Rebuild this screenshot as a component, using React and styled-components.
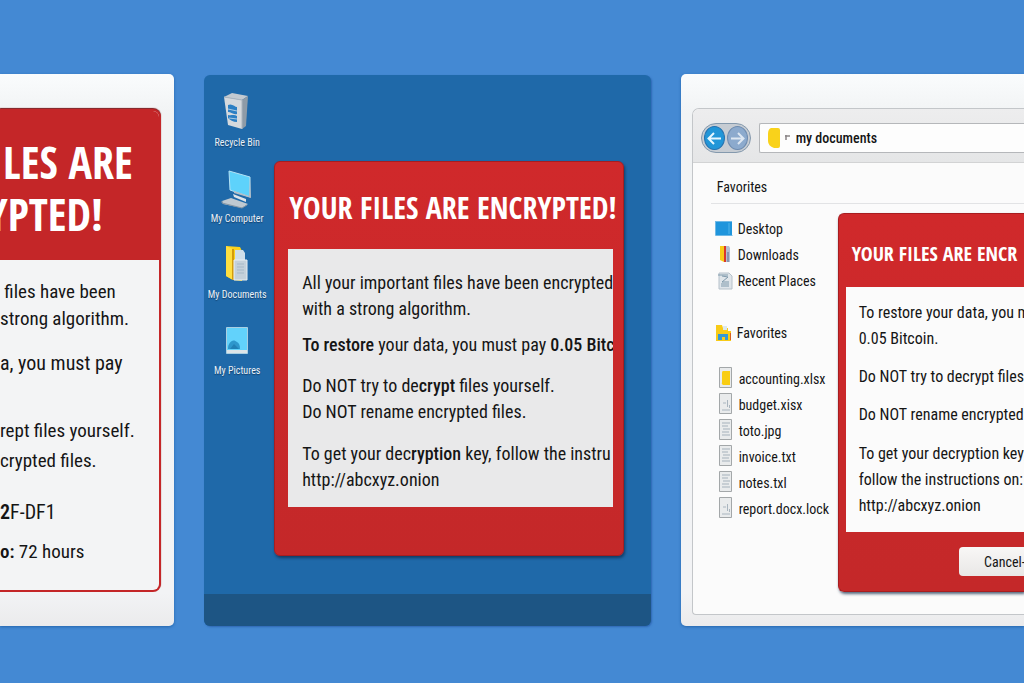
import React from 'react';
import styled, { createGlobalStyle } from 'styled-components';

const GlobalStyle = createGlobalStyle`
  * {
    box-sizing: border-box;
  }

  body {
    margin: 0;
    background: #4489d3;
    color: #151515;
    font-family: 'Roboto Condensed', 'Open Sans', sans-serif;
    overflow-x: hidden;
  }

  p, h1, h2, ul {
    margin: 0;
    padding: 0;
  }
`;

const Page = styled.main`
  display: grid;
  grid-template-columns: 174fr 446fr 343fr;
  column-gap: 30px;
  min-height: 100vh;
  padding: 74px 0 57px;
`;

const Panel = styled.section`
  min-width: 0;
  overflow: hidden;
  display: flex;
  flex-direction: column;
  border-radius: ${p => p.$radius};
  background: linear-gradient(#fafcfd, #f1f3f4 40px, #f2f3f5 94%, #ebebec);
  box-shadow: 0 1px 3px #2466ad;
`;

const Title = styled.h2`
  color: #fff;
  font-family: 'Open Sans Condensed', 'Roboto Condensed', sans-serif;
  font-weight: 700;
  font-size: ${p => p.$size}px;
  line-height: ${p => p.$line}px;
  white-space: nowrap;
`;

const Overhang = styled.span`
  display: block;
  margin-left: -16px;
`;

const Text = styled.p`
  font-size: ${p => p.$size || 18}px;
  line-height: ${p => p.$line || 26}px;
  margin-top: ${p => p.$top || 0}px;
  white-space: nowrap;

  b {
    font-weight: 600;
  }

  em {
    font-style: normal;
    font-weight: 500;
  }
`;

const Notice = styled.article`
  flex: 1;
  display: flex;
  flex-direction: column;
  overflow: hidden;
  margin: 35px 13px 34px 0;
  border: 2px solid #c42628;
  border-left: 0;
  border-radius: 0 8px 8px 0;
  background: #f3f4f5;
  box-shadow: 0 -1px 1px #7c1518;
`;

const NoticeHead = styled.header`
  padding: 25px 0 20px 3px;
  background: #c42628;
`;

const NoticeBody = styled.div`
  padding: 18px 0 0;
`;

const Desktop = styled(Panel)`
  background: #1f69a9;
  margin-top: 1px;
  box-shadow: 1px 1px 2px #2d66b3;
`;

const DesktopArea = styled.div`
  flex: 1;
  display: flex;
  align-items: flex-start;
`;

const Shortcuts = styled.ul`
  width: 70px;
  flex: none;
  list-style: none;
  padding-top: 16px;
`;

const Shortcut = styled.li`
  height: 76px;
  padding-right: 4px;
  display: flex;
  flex-direction: column;
  align-items: center;
  color: #eaf1f8;
  font-size: 10px;
  line-height: 16px;
  white-space: nowrap;
  text-shadow: 0 1px 1px #123f69;
`;

const Taskbar = styled.footer`
  height: 32px;
  background: #1d5584;
`;

const Alert = styled.article`
  flex: 1;
  min-width: 0;
  margin: ${p => p.$margin};
  border-radius: ${p => p.$flush ? '6px 0 0 6px' : '6px'};
  border: 1px solid #a81d20;
  border-right-width: ${p => p.$flush ? 0 : '1px'};
  background: linear-gradient(#d0292b, #c42829);
  box-shadow: 1px 2px 3px rgba(14, 40, 70, 0.7);
`;

const Paper = styled.div`
  margin: ${p => p.$margin};
  padding: ${p => p.$padding};
  background: ${p => p.$color};
  overflow: hidden;
`;

const Explorer = styled.div`
  flex: 1;
  display: flex;
  flex-direction: column;
  margin: 34px 0 11px 11px;
  border: 1px solid #c3c6c9;
  border-right: 0;
  border-radius: 7px 0 0 4px;
  background: #fbfbfb;
  overflow: hidden;
`;

const Toolbar = styled.header`
  display: flex;
  align-items: center;
  gap: 8px;
  padding: 14px 0 9px 8px;
  background: linear-gradient(#ededee, #e5e6e7);
  border-bottom: 1px solid #d2d3d4;
`;

const NavPill = styled.nav`
  display: flex;
  align-items: center;
  justify-content: space-between;
  width: 50px;
  height: 30px;
  padding: 0 2px;
  border: 1px solid #8499ad;
  border-radius: 15px;
  background: #c6ccd3;
`;

const NavButton = styled.button`
  width: 21px;
  height: 24px;
  padding: 0;
  display: grid;
  place-items: center;
  border: 1px solid ${p => p.$active ? '#2673b0' : '#6e8cb0'};
  border-radius: 50%;
  background: ${p => p.$active ? '#2196d8' : '#8caacd'};
`;

const Address = styled.label`
  flex: 1;
  min-width: 0;
  height: 30px;
  display: flex;
  align-items: center;
  gap: 5px;
  padding-left: 8px;
  border: 1px solid #b5b7ba;
  border-right: 0;
  border-radius: 2px 0 0 2px;
  background: #fdfdfd;

  input {
    flex: 1;
    min-width: 0;
    padding: 0;
    border: 0;
    outline: 0;
    background: none;
    color: #151515;
    font: 500 14px 'Roboto Condensed', sans-serif;
  }
`;

const SectionTitle = styled.h2`
  margin: 0 0 0 18px;
  padding: 11px 0 3px 6px;
  border-bottom: 1px solid #e2e3e5;
  font-size: 14px;
  line-height: 26px;
  font-weight: 400;
`;

const Content = styled.div`
  flex: 1;
  display: flex;
  align-items: flex-start;
`;

const Sidebar = styled.div`
  width: 145px;
  flex: none;
  padding: 12px 0 0 22px;
`;

const List = styled.ul`
  list-style: none;
  margin-bottom: ${p => p.$gap || 0}px;
`;

const Item = styled.li`
  height: 26px;
  display: flex;
  align-items: center;
  gap: 5px;
  font-size: 14px;
  white-space: nowrap;

  svg {
    flex: none;
  }
`;

const Actions = styled.div`
  display: flex;
  justify-content: flex-end;
  padding: 15px 0 15px;
`;

const CancelButton = styled.button`
  width: 65px;
  height: 29px;
  padding: 0 0 0 25px;
  border: 0;
  border-radius: 4px 0 0 4px;
  background: linear-gradient(#f8f7f6, #e9e7e6);
  color: #151515;
  font: 14px 'Roboto Condensed', sans-serif;
  text-align: left;
  white-space: nowrap;
`;

const RecycleIcon = () => (
  <svg width="28" height="44" viewBox="0 0 28 44">
    <path d="M1 6 9 2l16 3-6 4z" fill="#c3cad1" />
    <path d="M1 6l18 3v29L5 34z" fill="#d5d9dd" />
    <path d="M19 9l6-4-2 30-4 3z" fill="#8e9ba7" />
    <path d="M1 6l18 3v29" fill="none" stroke="#aab4bd" />
    <path d="M5 14c4-2 7 2 9 2v7c-4 1-6-2-9-2zM5 24c3 1 6-1 9 1v6c-4 0-7-2-9-4z" fill="#2c7fc4" />
    <path d="M5 18l9 2M6 27l8 1" stroke="#a8cbe6" />
  </svg>
);

const ComputerIcon = () => (
  <svg width="36" height="44" viewBox="0 0 36 44">
    <path d="M10 4l21 6v20L11 23z" fill="#5ed2fb" stroke="#b3e2f5" />
    <path d="M31 10l1 21-17-5 0-2 15 5z" fill="#b3bdc6" />
    <path d="M14 27l13 5v3l-12-5z" fill="#dfe4e8" />
    <path d="M3 34l9-3 17 6-6 4-19-4z" fill="#bfc9d1" />
    <path d="M3 34v2l20 5 5-3" fill="none" stroke="#8495a3" />
  </svg>
);

const DocumentsIcon = () => (
  <svg width="26" height="44" viewBox="0 0 26 44">
    <path d="M2 3l14 1 2 4v30l-9-1-7-4z" fill="#fbd21c" />
    <path d="M2 3l7 3v31l-7-4z" fill="#ffdf40" />
    <path d="M9 6v31" stroke="#d39c0c" strokeWidth="2" />
    <path d="M11 7h8l2 3v8H11z" fill="#cfdeea" />
    <path d="M10 17h13v20H10z" fill="#c4d0da" stroke="#e9eff3" />
    <path d="M13 21h7M13 24h7M13 27h7M13 30h7" stroke="#a6b8c7" />
  </svg>
);

const PictureIcon = () => (
  <svg width="24" height="44" viewBox="0 0 24 44">
    <path d="M1.500 8.500h21v26h-21z" fill="#62d2fb" stroke="#a9cfe2" />
    <path d="M2 31h20v3H2z" fill="#dce4e8" />
    <path d="M3 30c0-7 5-11 9-7 2 1 3 3 3 7z" fill="#2e97cc" />
    <path d="M5 30l4-5 5 5z" fill="#2180b5" />
  </svg>
);

const Arrow = ({ flip }) => (
  <svg width="17" height="17" viewBox="0 0 17 17">
    <path
      d={flip ? 'M2 8.500h12M9 3l5.500 5.500L9 14' : 'M15 8.500H3M8 3L2.500 8.500 8 14'}
      fill="none"
      stroke={flip ? '#dde7f2' : '#e5f7ff'}
      strokeWidth="2"
    />
  </svg>
);

const TabIcon = () => (
  <svg width="12" height="20" viewBox="0 0 12 20">
    <path d="M3 0h7q2 0 2 2v16q0 2-2 2H6Q0 18 0 13V6Q0 1 3 0z" fill="#f9d21b" />
  </svg>
);

const CrumbIcon = () => (
  <svg width="6" height="6" viewBox="0 0 6 6">
    <path d="M0 1h5M1 0v5" stroke="#8b8587" strokeWidth="1.500" />
  </svg>
);

const DesktopIcon = () => (
  <svg width="18" height="20" viewBox="0 0 18 20">
    <path d="M1 3h16v13H1z" fill="#1f95dc" />
    <path d="M0 2.500h17M.5 3v13.500h17" fill="none" stroke="#6fb9e6" />
    <path d="M14 4v11" stroke="#51b5ea" />
  </svg>
);

const DownloadsIcon = () => (
  <svg width="18" height="20" viewBox="0 0 18 20">
    <path d="M5 1h4v16l-4-2z" fill="#f8cc19" />
    <path d="M9 1h2v16H9z" fill="#d8372d" />
    <path d="M11 1h3l1 2v14h-4z" fill="#b5bfd0" />
    <path d="M13 7v10" stroke="#5c6d90" />
  </svg>
);

const RecentIcon = () => (
  <svg width="18" height="20" viewBox="0 0 18 20">
    <path d="M4 2h10l3 3v13H4z" fill="#dfe5ea" stroke="#b6c1ca" />
    <path d="M3 4h10M7 5l6 1-6 5h7M6 13h8M6 15h8" fill="none" stroke="#7f99ab" />
  </svg>
);

const FavoritesIcon = () => (
  <svg width="17" height="20" viewBox="0 0 17 20">
    <path d="M1 2h6l1 3h5v3h3v10H1z" fill="#f8cb18" />
    <path d="M8 3h4v4H8z" fill="#dce8ef" />
    <path d="M3 11h10v6h-3v-3H7v3H3z" fill="#3499d5" />
    <path d="M15.500 10v7" stroke="#d86022" />
  </svg>
);

const FileIcon = ({ kind }) => (
  <svg width="19" height="26" viewBox="0 0 19 26">
    <path d="M4.500 1.500h12v20h-12z" fill="#e9ebec" stroke="#a3a7a9" />
    {kind === 'sheet' && <path d="M8 5h7v14H8q-2-1-1-3V7q0-2 1-2z" fill="#f9cd12" />}
    {kind === 'plain' && <path d="M12.500 8v7M7 18h8M14.500 13v3M8 11h3" stroke="#a9b5bf" />}
    {kind === 'text' && <path d="M7 5h8M7 8h6M8 11h7M7 14h7M7 17h8" stroke="#a5b1bb" />}
  </svg>
);

const shortcuts = [
  { name: 'Recycle Bin', Icon: RecycleIcon },
  { name: 'My Computer', Icon: ComputerIcon },
  { name: 'My Documents', Icon: DocumentsIcon },
  { name: 'My Pictures', Icon: PictureIcon }
];

const places = [
  { name: 'Desktop', Icon: DesktopIcon },
  { name: 'Downloads', Icon: DownloadsIcon },
  { name: 'Recent Places', Icon: RecentIcon }
];

const files = [
  { name: 'accounting.xlsx', kind: 'sheet' },
  { name: 'budget.xisx', kind: 'plain' },
  { name: 'toto.jpg', kind: 'text' },
  { name: 'invoice.txt', kind: 'text' },
  { name: 'notes.txl', kind: 'text' },
  { name: 'report.docx.lock', kind: 'plain' }
];

const NoticePanel = () => (
  <Panel $radius="0 5px 5px 0">
    <Notice>
      <NoticeHead>
        <Title $size={44} $line={52}>LES ARE <Overhang>YPTED!</Overhang></Title>
      </NoticeHead>
      <NoticeBody>
        <Text $size={19} $line={27}>&nbsp;files have been<br />strong algorithm.</Text>
        <Text $size={20} $line={28} $top={17}>a, you must pay</Text>
        <Text $size={19} $line={30} $top={39}>rept files yourself.<br />crypted files.</Text>
        <Text $size={20} $line={30} $top={21}><b>2</b>F-DF1</Text>
        <Text $size={19} $line={30} $top={10}><b>o:</b> 72 hours</Text>
      </NoticeBody>
    </Notice>
  </Panel>
);

const DesktopPanel = () => (
  <Desktop $radius="6px">
    <DesktopArea>
      <Shortcuts>
        {shortcuts.map(({ name, Icon }) => (
          <Shortcut key={name}>
            <Icon />
            {name}
          </Shortcut>
        ))}
      </Shortcuts>
      <Alert $margin="86px 27px 36px 0">
        <Paper as="header" $margin="0" $padding="26px 0 21px 14px" $color="none">
          <Title $size={30} $line={40}>YOUR FILES ARE ENCRYPTED!</Title>
        </Paper>
        <Paper $margin="0 10px 48px 13px" $padding="21px 0 14px 14px" $color="#e9e9ea">
          <Text>All your important files have been encrypted<br />with a strong algorithm.</Text>
          <Text $top={10}><em>To restore</em> your data, you must pay <em>0.05 Bitc</em></Text>
          <Text $top={15}>Do NOT try to de<em>crypt</em> files yourself.<br />Do NOT rename encrypted files.</Text>
          <Text $top={16}>To get your dec<em>ryption</em> key, follow the instru<br />http://abcxyz.onion</Text>
        </Paper>
      </Alert>
    </DesktopArea>
    <Taskbar />
  </Desktop>
);

const ExplorerPanel = () => (
  <Panel $radius="5px 0 0 5px">
    <Explorer>
      <Toolbar>
        <NavPill>
          <NavButton $active aria-label="Back"><Arrow /></NavButton>
          <NavButton aria-label="Forward"><Arrow flip /></NavButton>
        </NavPill>
        <Address>
          <TabIcon />
          <CrumbIcon />
          <input aria-label="Address" defaultValue="my documents" />
        </Address>
      </Toolbar>
      <SectionTitle>Favorites</SectionTitle>
      <Content>
        <Sidebar>
          <List $gap={26}>
            {places.map(({ name, Icon }) => <Item key={name}><Icon />{name}</Item>)}
          </List>
          <List $gap={20}>
            <Item><FavoritesIcon />Favorites</Item>
          </List>
          <List>
            {files.map(({ name, kind }) => (
              <Item key={name}><FileIcon kind={kind} />{name}</Item>
            ))}
          </List>
        </Sidebar>
        <Alert $flush $margin="9px 0 22px 0">
          <Paper as="header" $margin="0" $padding="24px 0 17px 13px" $color="none">
            <Title $size={20} $line={32}>YOUR FILES ARE ENCR</Title>
          </Paper>
          <Paper $margin="0 0 0 7px" $padding="13px 0 13px 13px" $color="#fbfbfb">
            <Text $size={16}>To restore your data, you must pay<br />0.05 Bitcoin.</Text>
            <Text $size={16} $top={12}>Do NOT try to decrypt files</Text>
            <Text $size={16} $top={12}>Do NOT rename encrypted</Text>
            <Text $size={16} $top={13}>To get your decryption key;<br />follow the instructions on:<br />http://abcxyz.onion</Text>
          </Paper>
          <Actions>
            <CancelButton>Cancel-</CancelButton>
          </Actions>
        </Alert>
      </Content>
    </Explorer>
  </Panel>
);

export default function App() {
  return (
    <>
      <GlobalStyle />
      <Page>
        <NoticePanel />
        <DesktopPanel />
        <ExplorerPanel />
      </Page>
    </>
  );
}
